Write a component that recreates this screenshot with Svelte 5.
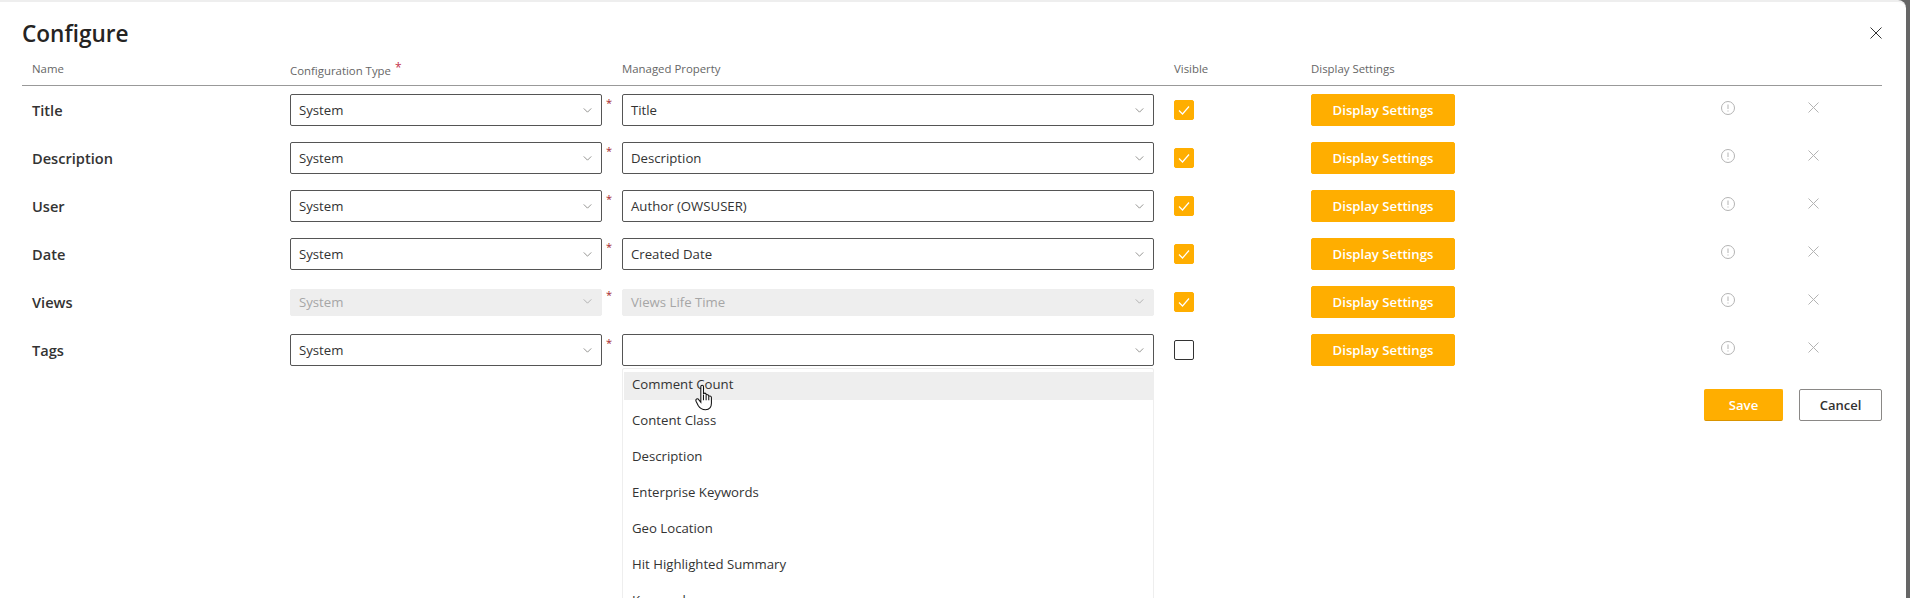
<script>
const rows = [
	{ name: 'Title', type: 'System', prop: 'Title', visible: true },
	{ name: 'Description', type: 'System', prop: 'Description', visible: true },
	{ name: 'User', type: 'System', prop: 'Author (OWSUSER)', visible: true },
	{ name: 'Date', type: 'System', prop: 'Created Date', visible: true },
	{ name: 'Views', type: 'System', prop: 'Views Life Time', visible: true, disabled: true },
	{ name: 'Tags', type: 'System', prop: '', visible: false, open: true }
];
const options = ['Comment Count', 'Content Class', 'Description', 'Enterprise Keywords', 'Geo Location', 'Hit Highlighted Summary', 'Keywords'];
</script>

{#snippet chevron()}
	<svg class="chevron" viewBox="0 0 10 6" width="9" height="5"><polyline points="0.5,0.5 5,5 9.5,0.5" /></svg>
{/snippet}

<div class="dialog">
	<header class="title-row">
		<h1>Configure</h1>
		<button class="close" aria-label="Close">
			<svg viewBox="0 0 12 12" width="12" height="12"><path d="M0.5 0.5 L11.5 11.5 M11.5 0.5 L0.5 11.5" /></svg>
		</button>
	</header>

	<div class="cols head">
		<span class="first">Name</span>
		<span class="type-head">Configuration Type <em>*</em></span>
		<span></span>
		<span>Managed Property</span>
		<span></span>
		<span>Visible</span>
		<span>Display Settings</span>
	</div>

	<div class="rows">
		{#each rows as row}
			<div class="cols row">
				<span class="first label">{row.name}</span>
				<div class="select" class:disabled={row.disabled}>
					<span>{row.type}</span>
					{@render chevron()}
				</div>
				<span class="req">*</span>
				<div class="prop-wrap">
					<div class="select" class:disabled={row.disabled}>
						<span>{row.prop}</span>
						{@render chevron()}
					</div>
					{#if row.open}
						<ul class="menu">
							{#each options as opt, i}
								<li class:hover={i == 0}>{opt}</li>
							{/each}
						</ul>
						<svg class="hand" viewBox="0 0 17 25" width="18" height="27">
							<path d="M5.5 2 C5.5 .5 8 .5 8 2 L8 9.5 C8 8 10.5 8 10.5 9.5 L10.5 10.5 C10.5 9.5 13 9.5 13 11 L13 12 C13 10.5 15.5 11 15.5 12.5 L15.5 18 C15.5 21 14 24 10 24 C6 24 4.5 22.5 3 20 L1 16 C.2 14 2.5 13 3.5 14.5 L5.5 17 Z" />
							<path d="M8 10 V15 M10.5 10.5 V15 M13 12 V15" />
						</svg>
					{/if}
				</div>
				<span></span>
				<span class="check" class:on={row.visible}>
					{#if row.visible}
						<svg viewBox="0 0 12 10" width="12" height="10"><polyline points="1,5.5 4.5,9 11,1.5" /></svg>
					{/if}
				</span>
				<button class="btn primary wide">Display Settings</button>
				<span></span>
				<svg class="info" viewBox="0 0 14 14" width="14" height="14">
					<circle cx="7" cy="7" r="6.5" />
					<path d="M7 3.5 V8 M7 9.5 V10.5" />
				</svg>
				<span></span>
				<svg class="remove" viewBox="0 0 11 11" width="11" height="11"><path d="M.5 .5 L10.5 10.5 M10.5 .5 L.5 10.5" /></svg>
			</div>
		{/each}
	</div>

	<div class="actions">
		<button class="btn primary save">Save</button>
		<button class="btn cancel">Cancel</button>
	</div>
</div>

<style>
	:global(html), :global(body) {
		margin: 0;
		height: 598px;
		overflow: hidden;
		background: #666;
	}

	.dialog {
		width: 1906px;
		height: 598px;
		box-sizing: border-box;
		background: #fff;
		border-top: 2px solid #eeeeee;
		border-top-right-radius: 8px;
		padding: 0 24px 0 22px;
		overflow: hidden;
		font-family: "Open Sans", "Noto Sans", sans-serif;
		font-size: 13.2px;
		color: #333;
	}

	.title-row {
		display: flex;
		justify-content: space-between;
		align-items: center;
		height: 61px;
	}
	h1 {
		margin: 2px 0 0;
		font-size: 22.6px;
		font-weight: 600;
		color: #252423;
	}
	.close {
		border: none;
		background: none;
		padding: 0;
		width: 12px;
		height: 12px;
	}
	.close svg {
		display: block;
		fill: none;
		stroke: #333;
		stroke-width: 1;
	}

	.cols {
		display: grid;
		grid-template-columns: 268px 312px 20px 532px 20px 137px 144px 266px 14px 73px 11px 1fr;
		align-items: center;
	}
	.first {
		padding-left: 10px;
	}

	.head {
		height: 22px;
		align-items: start;
		border-bottom: 1px solid #999;
		font-size: 11.4px;
		color: #666;
		line-height: 12px;
	}
	.type-head {
		padding-top: 2px;
	}
	.type-head em {
		color: #c4314b;
		font-style: normal;
		font-size: 12px;
		line-height: 0;
		vertical-align: 3px;
		margin-left: 1px;
	}

	.rows {
		margin-top: 8px;
	}
	.row {
		height: 32px;
		margin-bottom: 16px;
	}
	.label {
		font-size: 14.6px;
		font-weight: 600;
		color: #333;
	}

	.select {
		height: 32px;
		box-sizing: border-box;
		border: 1px solid #555;
		border-radius: 2px;
		display: flex;
		align-items: center;
		justify-content: space-between;
		padding: 0 9px 0 8px;
		background: #fff;
	}
	.select.disabled {
		height: 27px;
		margin-top: 1px;
		padding-bottom: 2px;
		border-color: #eee;
		background: #eeeeee;
		color: #a6a6a6;
	}
	.chevron {
		fill: none;
		stroke: #807e7c;
		stroke-width: 1;
		flex: none;
	}
	.select.disabled .chevron {
		stroke: #a6a6a6;
	}

	.req {
		align-self: start;
		padding: 1px 0 0 4px;
		color: #a4262c;
		font-size: 11px;
		line-height: 16px;
	}

	.prop-wrap {
		position: relative;
	}
	.menu {
		position: absolute;
		top: 34px;
		left: 0;
		right: 0;
		margin: 0;
		padding: 3px 0 0 1px;
		height: 300px;
		box-sizing: border-box;
		list-style: none;
		background: #fff;
		border: 1px solid #eee;
		border-radius: 2px;
		z-index: 2;
	}
	.menu li {
		height: 28px;
		line-height: 24px;
		margin-bottom: 8px;
		padding-left: 8px;
		white-space: nowrap;
	}
	.menu li.hover {
		background: #eeeeee;
	}
	.hand {
		position: absolute;
		top: 50px;
		left: 73px;
		z-index: 3;
		fill: #fff;
		stroke: #111;
		stroke-width: 1;
	}

	.check {
		width: 20px;
		height: 20px;
		box-sizing: border-box;
		border: 1px solid #333;
		border-radius: 2px;
		display: flex;
		align-items: center;
		justify-content: center;
	}
	.check.on {
		background: #ffae00;
		border-color: #ffae00;
	}
	.check svg {
		fill: none;
		stroke: #fff;
		stroke-width: 1.2;
	}

	.btn {
		font: inherit;
		font-weight: 600;
		border-radius: 2px;
		padding: 0;
		height: 32px;
		box-sizing: border-box;
	}
	.primary {
		background: #ffae00;
		border: 1px solid #ffae00;
		color: #fff;
	}
	.wide {
		width: 144px;
	}

	.info {
		margin-bottom: 5px;
		fill: none;
		stroke: #b3b3b3;
		stroke-width: 1;
	}
	.remove {
		margin-bottom: 5px;
		fill: none;
		stroke: #b3b3b3;
		stroke-width: 1;
	}

	.actions {
		display: flex;
		justify-content: flex-end;
		gap: 16px;
		margin-top: 23px;
	}
	.save {
		width: 79px;
		border-bottom-color: #d99400;
	}
	.cancel {
		width: 83px;
		background: #fff;
		border: 1px solid #8a8886;
		color: #323130;
		font-size: 13px;
	}
</style>
